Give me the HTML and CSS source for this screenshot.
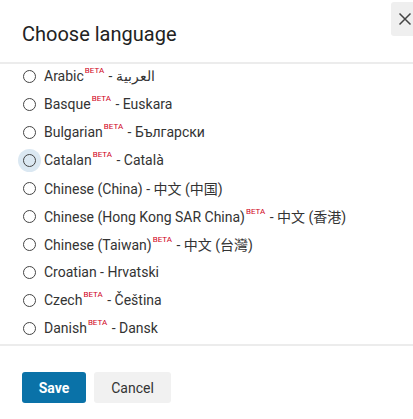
FILE: index.html
```html
<!DOCTYPE html>
<html>
<head>
<meta charset="utf-8">
<link rel="stylesheet" href="styles.css">
</head>
<body>
<div class="dialog">
  <div class="header">
    <h1 class="title">Choose language</h1>
    <button class="close" aria-label="Close">
      <svg width="14" height="14" viewBox="0 0 14 14"><path d="M1.5 1.5L12.5 12.5M12.5 1.5L1.5 12.5" stroke="#444" stroke-width="1.5" fill="none"/></svg>
    </button>
  </div>
  <div class="list">
    <div class="inner">
      <label class="row"><span class="radio"></span><span class="txt">Arabic<sup>BETA</sup> - العربية</span></label>
      <label class="row"><span class="radio"></span><span class="txt">Basque<sup>BETA</sup> - Euskara</span></label>
      <label class="row"><span class="radio"></span><span class="txt">Bulgarian<sup>BETA</sup> - Български</span></label>
      <label class="row"><span class="radio focus"></span><span class="txt">Catalan<sup>BETA</sup> - Català</span></label>
      <label class="row"><span class="radio"></span><span class="txt">Chinese (China) - 中文 (中国)</span></label>
      <label class="row"><span class="radio"></span><span class="txt">Chinese (Hong Kong SAR China)<sup>BETA</sup> - 中文 (香港)</span></label>
      <label class="row"><span class="radio"></span><span class="txt">Chinese (Taiwan)<sup>BETA</sup> - 中文 (台灣)</span></label>
      <label class="row"><span class="radio"></span><span class="txt">Croatian - Hrvatski</span></label>
      <label class="row"><span class="radio"></span><span class="txt">Czech<sup>BETA</sup> - Čeština</span></label>
      <label class="row"><span class="radio"></span><span class="txt">Danish<sup>BETA</sup> - Dansk</span></label>
    </div>
  </div>
  <div class="footer">
    <button class="btn save">Save</button>
    <button class="btn cancel">Cancel</button>
  </div>
</div>
</body>
</html>
```
FILE: styles.css
```css
html, body {
  margin: 0;
  padding: 0;
  background: #fff;
}
body {
  font-family: Roboto, "Noto Sans CJK SC", "Liberation Sans", sans-serif;
  color: #333;
}
.dialog {
  width: 413px;
  height: 419px;
  overflow: hidden;
}
.header {
  position: relative;
  height: 62px;
  display: flex;
  align-items: center;
  padding-left: 22px;
  box-sizing: border-box;
}
.title {
  margin: 0;
  font-weight: 400;
  font-size: 20px;
  color: #222;
  padding-top: 5px;
}
.close {
  position: absolute;
  top: 2px;
  left: 391px;
  width: 30px;
  height: 34px;
  border: none;
  border-radius: 3px;
  background: #efefef;
  padding: 0 0 0 7px;
  display: flex;
  align-items: center;
  justify-content: flex-start;
}
.list {
  border-top: 2px solid #ececec;
  border-bottom: 2px solid #ececec;
  height: 280px;
  overflow: hidden;
}
.inner {
  margin-top: -2px;
}
.row {
  display: flex;
  align-items: center;
  height: 28px;
  padding-left: 23px;
  font-size: 14px;
  color: #333;
}
.radio {
  width: 11px;
  height: 11px;
  border: 1.2px solid #444;
  border-radius: 50%;
  flex: none;
  margin-right: 8px;
}
.radio.focus {
  background: #dbe8f2;
  box-shadow: 0 0 0 5px #dbe8f2;
}
.txt {
  white-space: nowrap;
}
sup {
  color: #d0021b;
  font-size: 8px;
  font-weight: 400;
  vertical-align: 8px;
  line-height: 0;
  margin-left: 1px;
  margin-right: 1px;
}
.footer {
  display: flex;
  gap: 8px;
  padding: 26px 22px 0;
}
.btn {
  height: 31px;
  border: none;
  border-radius: 3px;
  font-family: Roboto, "Liberation Sans", sans-serif;
  font-size: 14px;
  padding: 0;
}
.save {
  width: 64px;
  background: #0a72a8;
  color: #fff;
  font-weight: 700;
}
.cancel {
  width: 77px;
  background: #f1f1f1;
  color: #333;
}
```
